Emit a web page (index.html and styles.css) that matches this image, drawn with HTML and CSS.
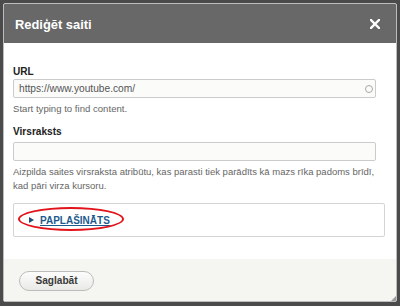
FILE: index.html
```html
<!DOCTYPE html>
<html lang="lv">
<head>
<meta charset="utf-8">
<title>Rediģēt saiti</title>
<link rel="stylesheet" href="styles.css">
</head>
<body>
<div class="dialog">
  <div class="titlebar">
    <span class="title">Rediģēt saiti</span>
    <button class="close" aria-label="Aizvērt">
      <svg width="10" height="10" viewBox="0 0 10 10"><path d="M1 1 L9 9 M9 1 L1 9" stroke="#fff" stroke-width="2.4" stroke-linecap="square"/></svg>
    </button>
  </div>
  <div class="content">
    <div class="field">
      <label class="label">URL</label>
      <div class="input url">
        <span class="value">https://www.youtube.com/</span>
        <span class="throbber"></span>
      </div>
      <div class="help">Start typing to find content.</div>
    </div>
    <div class="field">
      <label class="label label-title">Virsraksts</label>
      <div class="input"></div>
      <div class="help desc">Aizpilda saites virsraksta atribūtu, kas parasti tiek parādīts kā mazs rīka padoms brīdī, kad pāri virza kursoru.</div>
    </div>
    <div class="details">
      <div class="summary"><span class="arrow"></span><a class="summary-link" href="#">PAPLAŠINĀTS</a></div>
      <span class="mark"></span>
    </div>
  </div>
  <div class="footer">
    <button class="save">Saglabāt</button>
  </div>
  <span class="grip"></span>
</div>
</body>
</html>
```
FILE: styles.css
```css
html, body {
  margin: 0;
  padding: 0;
}
body {
  background: #4b4b4b;
  width: 400px;
  height: 306px;
  overflow: hidden;
  font-family: "Liberation Sans", Arial, sans-serif;
}
.dialog {
  position: relative;
  margin: 3px 0 0 3px;
  width: 392px;
  height: 297px;
  border: 1px solid #bdbdbd;
  border-radius: 2px;
  background: #fff;
  display: flex;
  flex-direction: column;
  overflow: hidden;
}
.titlebar {
  height: 39px;
  background: #686868;
  display: flex;
  align-items: center;
  justify-content: space-between;
  padding: 0 16px 0 11px;
  flex: none;
}
.title {
  color: #fff;
  font-weight: bold;
  font-size: 12.9px;
  margin-top: 1px;
}
.close {
  border: 0;
  background: none;
  padding: 0;
  width: 10px;
  height: 10px;
  display: flex;
  margin-top: 1px;
}
.content {
  flex: 1;
  padding: 22px 11px 0 9px;
}
.field {
  margin-bottom: 10px;
}
.label {
  display: block;
  font-weight: bold;
  font-size: 10.1px;
  line-height: 13px;
  color: #222;
  margin-bottom: 1px;
}
.label-title {
  margin-bottom: 4px;
}
.input {
  box-sizing: border-box;
  width: 363px;
  height: 19px;
  border: 1px solid #cbcbcb;
  border-radius: 2px;
  background: #fbfbfa;
  display: flex;
  align-items: center;
  justify-content: space-between;
  padding: 0 2px 0 5px;
}
.value {
  font-size: 10.2px;
  color: #555;
}
.throbber {
  width: 6px;
  height: 6px;
  border: 1.5px solid #a8a8a8;
  border-radius: 50%;
}
.help {
  font-size: 9.6px;
  line-height: 13px;
  color: #666;
  margin-top: 4px;
}
.desc {
  font-size: 9.5px;
  line-height: 14px;
  margin-top: 4px;
}
.details {
  position: relative;
  box-sizing: border-box;
  width: 372px;
  height: 34px;
  margin-top: 11px;
  border: 1px solid #d4d4d4;
  border-radius: 2px;
  display: flex;
  align-items: center;
  padding-left: 15px;
}
.field + .details {
  margin-top: 0;
}
.field:last-of-type {
  margin-bottom: 11px;
}
.summary {
  display: flex;
  align-items: center;
  gap: 6px;
}
.arrow {
  width: 0;
  height: 0;
  border-top: 3px solid transparent;
  border-bottom: 3px solid transparent;
  border-left: 5px solid #1f4e7a;
}
.summary-link {
  font-size: 10px;
  font-weight: bold;
  color: #1d5b8f;
  text-decoration: underline;
}
.mark {
  position: absolute;
  left: 4px;
  top: 3px;
  width: 102px;
  height: 20px;
  border: 2px solid #e1141c;
  border-radius: 50%;
}
.footer {
  flex: none;
  height: 42px;
  background: #f5f5f2;
  padding: 11px 0 0 15px;
  box-sizing: border-box;
}
.save {
  width: 75px;
  height: 20px;
  border: 1px solid #bcbcbc;
  border-radius: 10px;
  background: linear-gradient(#fdfdfd, #e9e9e6);
  font-family: "Liberation Sans", Arial, sans-serif;
  font-weight: bold;
  font-size: 10.1px;
  color: #3a3a3a;
  padding: 0;
}
.grip {
  position: absolute;
  right: 0;
  bottom: 0;
  width: 0;
  height: 0;
  border-left: 5px solid transparent;
  border-bottom: 5px solid #9a9a9a;
}
```
